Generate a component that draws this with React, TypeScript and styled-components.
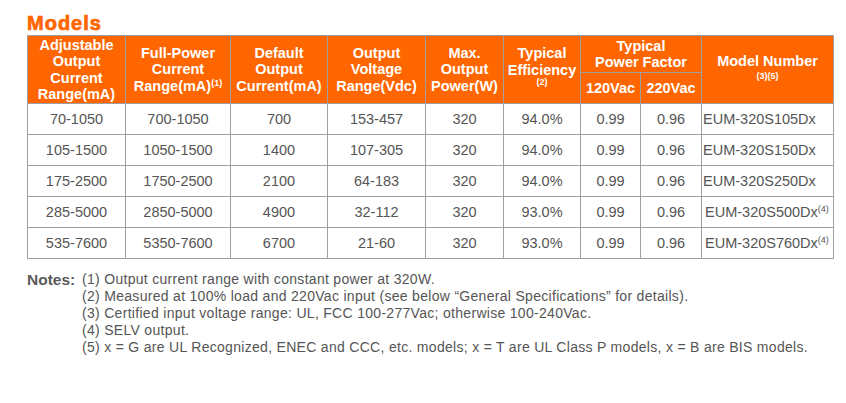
import React from "react";
import styled, { createGlobalStyle } from "styled-components";

const Global = createGlobalStyle`
  html, body { margin: 0; padding: 0; background: #fff; }
  body { font-family: "Liberation Sans", Arial, sans-serif; }
`;

const Page = styled.div`
  padding: 12px 0 0 27px;
  width: 806px;
`;

const Title = styled.h2`
  margin: 0 0 1px 0;
  font-family: "Liberation Sans", Arial, sans-serif;
  font-weight: bold;
  font-size: 20px;
  line-height: 22px;
  letter-spacing: 1px;
  color: #ff6600;
  -webkit-text-stroke: 0.7px #ff6600;
`;

const Table = styled.table`
  border-collapse: collapse;
  table-layout: fixed;
  width: 806px;
  font-family: "Liberation Sans", Arial, sans-serif;
`;

const Head = styled.th<{ $h?: number; $lift?: number }>`
  background: #ff6600;
  color: #fff;
  font-weight: bold;
  font-size: 14.5px;
  line-height: 16.5px;
  border: 1px solid #a0a0a0;
  padding: 0 0 ${(p) => p.$lift ?? 0}px 0;
  text-align: center;
  vertical-align: middle;
  height: ${(p) => p.$h ?? 30}px;
`;

const Sup = styled.sup`
  font-size: 9px;
  line-height: 0;
  vertical-align: 5px;
`;

const SmallLine = styled.div<{ $lh?: number }>`
  font-size: 9px;
  line-height: ${(p) => p.$lh ?? 10}px;
`;

const Cell = styled.td<{ $left?: boolean; $pad?: number }>`
  border: 1px solid #a0a0a0;
  height: 30px;
  padding: 0 0 0 ${(p) => p.$pad ?? 0}px;
  font-size: 14.5px;
  color: #555;
  text-align: ${(p) => (p.$left ? "left" : "center")};
  vertical-align: middle;
  white-space: nowrap;
`;

const CellSup = styled.sup`
  font-size: 9px;
  line-height: 0;
  vertical-align: 5px;
`;

const Notes = styled.div`
  display: grid;
  grid-template-columns: 55px 1fr;
  margin-top: 12px;
  font-family: "Liberation Sans", Arial, sans-serif;
  color: #555;
  font-size: 14px;
  letter-spacing: 0.3px;
  line-height: 17px;
`;

const NotesLabel = styled.div`
  font-weight: bold;
  font-size: 15.5px;
  letter-spacing: 0;
  color: #5a5a5a;
`;

const NoteList = styled.div`
  display: flex;
  flex-direction: column;
`;

const widths = [98, 105, 97, 98, 78, 77, 60, 61, 132];

type Row = {
  adj: string;
  full: string;
  def: string;
  volt: string;
  pow: string;
  eff: string;
  pf1: string;
  pf2: string;
  model: string;
  selv?: boolean;
};

const rows: Row[] = [
  { adj: "70-1050", full: "700-1050", def: "700", volt: "153-457", pow: "320", eff: "94.0%", pf1: "0.99", pf2: "0.96", model: "EUM-320S105Dx" },
  { adj: "105-1500", full: "1050-1500", def: "1400", volt: "107-305", pow: "320", eff: "94.0%", pf1: "0.99", pf2: "0.96", model: "EUM-320S150Dx" },
  { adj: "175-2500", full: "1750-2500", def: "2100", volt: "64-183", pow: "320", eff: "94.0%", pf1: "0.99", pf2: "0.96", model: "EUM-320S250Dx" },
  { adj: "285-5000", full: "2850-5000", def: "4900", volt: "32-112", pow: "320", eff: "93.0%", pf1: "0.99", pf2: "0.96", model: "EUM-320S500Dx", selv: true },
  { adj: "535-7600", full: "5350-7600", def: "6700", volt: "21-60", pow: "320", eff: "93.0%", pf1: "0.99", pf2: "0.96", model: "EUM-320S760Dx", selv: true },
];

const notes = [
  "(1) Output current range with constant power at 320W.",
  "(2) Measured at 100% load and 220Vac input (see below \u201CGeneral Specifications\u201D for details).",
  "(3) Certified input voltage range: UL, FCC 100-277Vac; otherwise 100-240Vac.",
  "(4) SELV output.",
  "(5) x = G are UL Recognized, ENEC and CCC, etc. models; x = T are UL Class P models, x = B are BIS models.",
];

export default function App() {
  return (
    <>
      <Global />
      <Page>
        <Title>Models</Title>
        <Table>
          <colgroup>
            {widths.map((w, i) => (
              <col key={i} style={{ width: w }} />
            ))}
          </colgroup>
          <thead>
            <tr>
              <Head rowSpan={2}>
                Adjustable
                <br />
                Output
                <br />
                Current
                <br />
                Range(mA)
              </Head>
              <Head rowSpan={2}>
                Full-Power
                <br />
                Current
                <br />
                Range(mA)<Sup>(1)</Sup>
              </Head>
              <Head rowSpan={2}>
                Default
                <br />
                Output
                <br />
                Current(mA)
              </Head>
              <Head rowSpan={2}>
                Output
                <br />
                Voltage
                <br />
                Range(Vdc)
              </Head>
              <Head rowSpan={2}>
                Max.
                <br />
                Output
                <br />
                Power(W)
              </Head>
              <Head rowSpan={2} $lift={7}>
                Typical
                <br />
                Efficiency
                <SmallLine $lh={9}>(2)</SmallLine>
              </Head>
              <Head colSpan={2} $h={36}>
                Typical
                <br />
                Power Factor
              </Head>
              <Head rowSpan={2} $lift={4}>
                Model Number
                <SmallLine $lh={12}>(3)(5)</SmallLine>
              </Head>
            </tr>
            <tr>
              <Head $h={30}>120Vac</Head>
              <Head $h={30}>220Vac</Head>
            </tr>
          </thead>
          <tbody>
            {rows.map((r) => (
              <tr key={r.model}>
                <Cell>{r.adj}</Cell>
                <Cell>{r.full}</Cell>
                <Cell>{r.def}</Cell>
                <Cell>{r.volt}</Cell>
                <Cell>{r.pow}</Cell>
                <Cell>{r.eff}</Cell>
                <Cell>{r.pf1}</Cell>
                <Cell>{r.pf2}</Cell>
                <Cell $left $pad={r.selv ? 3 : 1}>
                  {r.model}
                  {r.selv && <CellSup>(4)</CellSup>}
                </Cell>
              </tr>
            ))}
          </tbody>
        </Table>
        <Notes>
          <NotesLabel>Notes:</NotesLabel>
          <NoteList>
            {notes.map((n) => (
              <div key={n}>{n}</div>
            ))}
          </NoteList>
        </Notes>
      </Page>
    </>
  );
}
